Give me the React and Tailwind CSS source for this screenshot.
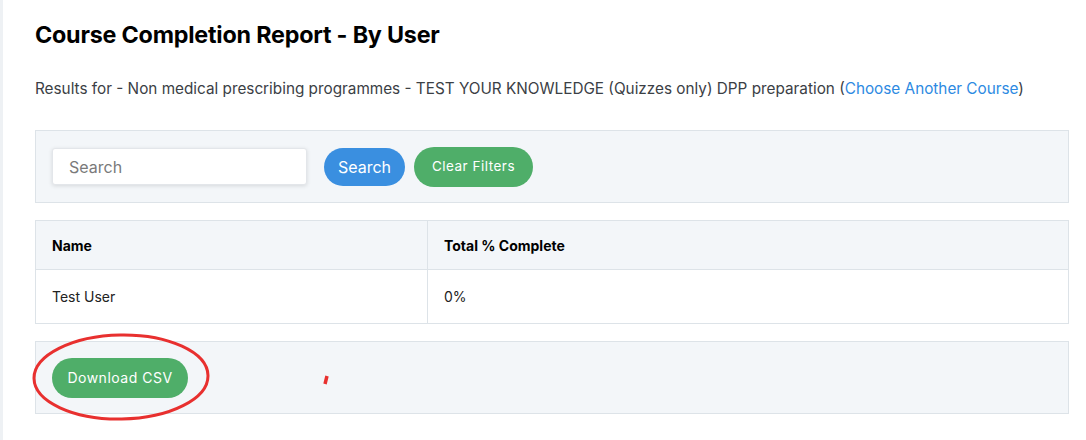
import React, { useState } from 'react';

const ROWS = [{ name: 'Test User', complete: '0%' }];

export default function App() {
  const [query, setQuery] = useState('');

  return (
    <div className="flex min-h-screen w-full bg-white text-[#212529]" style={{ fontFamily: 'Inter, "Noto Sans", sans-serif' }}>
      <div className="w-[3px] shrink-0 bg-[#eef1f4]" />
      <main className="flex-1 pl-[32px] pr-[17px] pt-[20px] pb-6">
        <h1 className="text-[23.3px] leading-[30px] font-bold tracking-[-0.2px] text-black">Course Completion Report - By User</h1>

        <p className="mt-[27px] text-[15.3px] leading-[24px] text-[#3b4045]">
          Results for - Non medical prescribing programmes - TEST YOUR KNOWLEDGE (Quizzes only) DPP preparation (
          <a href="#" className="text-[#2d8ae2]">Choose Another Course</a>)
        </p>

        <div className="mt-[29px] flex h-[73px] items-center gap-[17px] border border-[#dde3e8] bg-[#f3f6f9] px-[16px]">
          <input
            value={query}
            onChange={e => setQuery(e.target.value)}
            placeholder="Search"
            className="h-[37px] w-[255px] rounded-[3px] border border-[#e3e6ea] bg-white px-[16px] text-[16px] text-[#333] shadow-[0_1px_4px_rgba(0,0,0,0.12)] outline-none placeholder:text-[#7a7a7a]"
          />
          <div className="flex items-center gap-[9px]">
            <button className="h-[38px] w-[81px] rounded-full bg-[#3a8fe0] text-[16px] text-white">Search</button>
            <button className="h-[40px] w-[119px] rounded-full bg-[#4fae69] text-[13.5px] font-normal tracking-[0.5px] text-white">Clear Filters</button>
          </div>
        </div>

        <table className="mt-[17px] w-full border-collapse border border-[#dde3e8] text-[14px]">
          <thead>
            <tr className="h-[49px] bg-[#f3f6f9]">
              <th className="w-[392px] border border-[#dde3e8] px-[16px] text-left font-bold text-black">Name</th>
              <th className="border border-[#dde3e8] px-[16px] text-left font-bold text-black">Total % Complete</th>
            </tr>
          </thead>
          <tbody>
            {ROWS.map(r => (
              <tr key={r.name} className="h-[54px]">
                <td className="border border-[#dde3e8] px-[16px] text-[#222]">{r.name}</td>
                <td className="border border-[#dde3e8] px-[16px] text-[#222]">{r.complete}</td>
              </tr>
            ))}
          </tbody>
        </table>

        <div className="relative mt-[17px] flex h-[73px] items-center border border-[#dde3e8] bg-[#f3f6f9] px-[16px]">
          <button className="h-[40px] w-[136px] rounded-full bg-[#4fae69] text-[14px] font-normal tracking-[0.5px] text-white">Download CSV</button>
          {/* hand-drawn annotation */}
          <svg className="pointer-events-none absolute left-[-4px] top-[-9px]" width="300" height="90" viewBox="0 0 300 90">
            <ellipse cx="89" cy="44" rx="87" ry="42" fill="none" stroke="#e8302f" strokeWidth="3" transform="rotate(-1 89 44)" />
            <path d="M295 43 L293 51" stroke="#e8302f" strokeWidth="3.5" strokeLinecap="butt" />
          </svg>
        </div>
      </main>
    </div>
  );
}
